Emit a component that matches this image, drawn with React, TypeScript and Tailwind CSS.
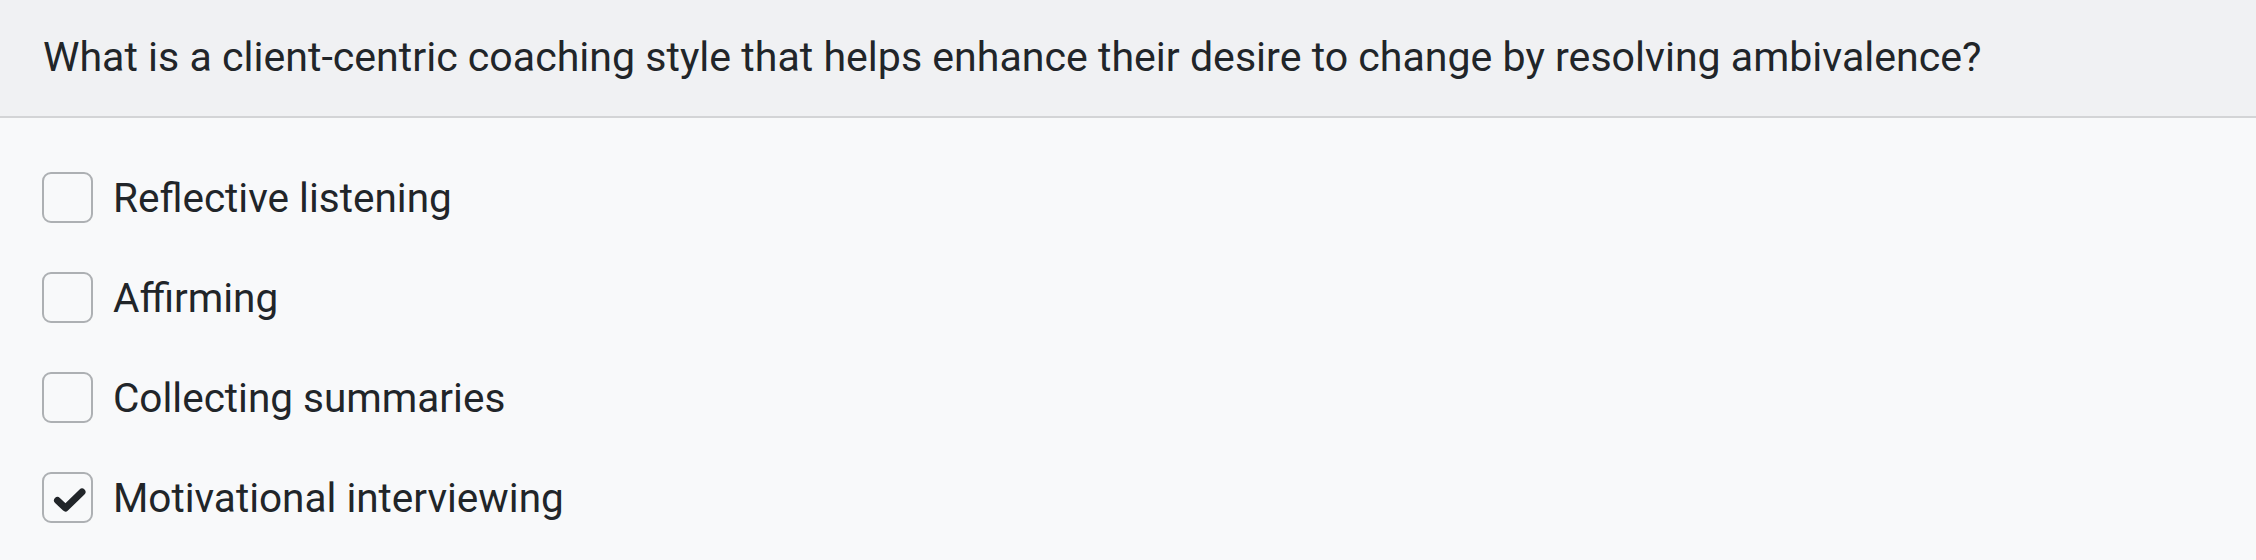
const options = [
  { label: "Reflective listening", checked: false },
  { label: "Affirming", checked: false },
  { label: "Collecting summaries", checked: false },
  { label: "Motivational interviewing", checked: true },
];

export default function App() {
  return (
    <div
      className="min-h-[560px] bg-[#f8f9fa] text-[#212529]"
      style={{ fontFamily: "Roboto, 'Liberation Sans', sans-serif" }}
    >
      <div className="flex h-[118px] items-center border-b-2 border-[#d3d4d6] bg-[#f0f1f3] px-[43px] pb-[3px]">
        <h1 className="text-[41.1px] font-normal leading-[48px]">
          What is a client-centric coaching style that helps enhance their desire to change by resolving ambivalence?
        </h1>
      </div>
      <div className="flex flex-col gap-[49px] px-[42px] pt-[54px]">
        {options.map((o) => (
          <label key={o.label} className="flex h-[51px] items-center gap-[20px]">
            <span className="flex h-[51px] w-[51px] shrink-0 items-center justify-center rounded-[9px] border-2 border-[#adb0b3] bg-[#f8f9fa]">
              {o.checked && (
                <svg width="51" height="51" viewBox="0 0 51 51" className="-m-[2px]">
                  <polyline
                    points="15.5,28.5 23.5,36 40,20"
                    fill="none"
                    stroke="#212529"
                    strokeWidth="7"
                    strokeLinecap="round"
                    strokeLinejoin="round"
                  />
                </svg>
              )}
            </span>
            <span className="text-[40.5px] leading-[48px]">{o.label}</span>
          </label>
        ))}
      </div>
    </div>
  );
}
